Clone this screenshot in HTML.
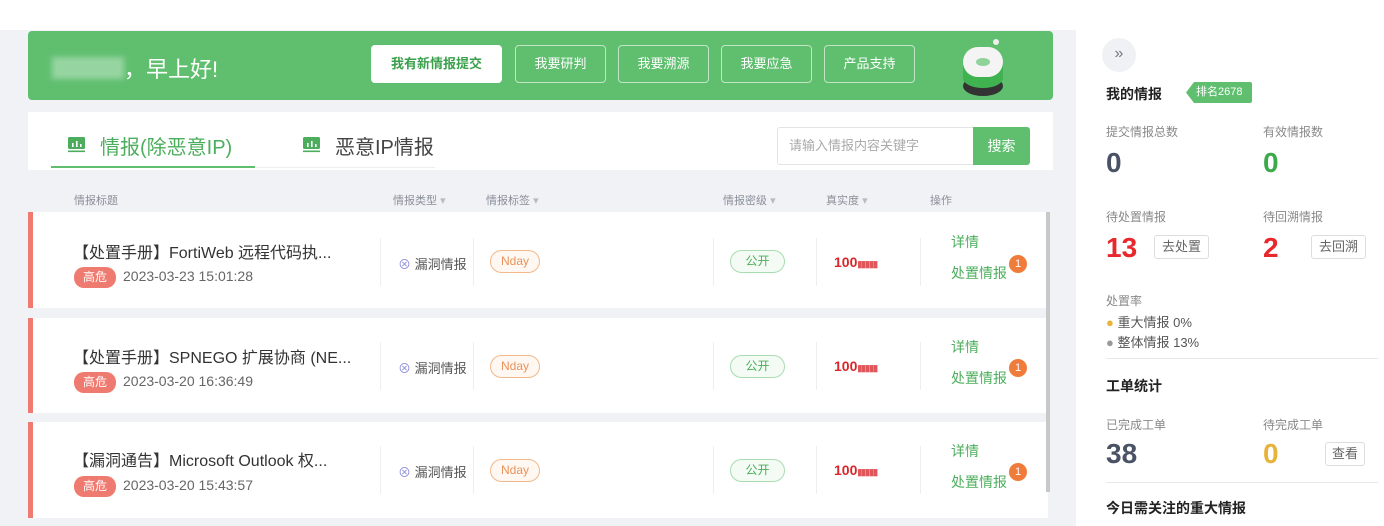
<!DOCTYPE html>
<html><head><meta charset="utf-8"><style>
*{margin:0;padding:0;box-sizing:border-box}
body{width:1384px;height:526px;overflow:hidden;background:#fff;font-family:"Liberation Sans","Noto Sans CJK SC",sans-serif;position:relative;color:#333}
.a{position:absolute}
.bg{left:0;top:30px;width:1070px;height:496px;background:#f0f2f5}
.ban{left:28px;top:31px;width:1025px;height:69px;background:#5fbf6f;border-radius:4px}
.btn{top:45px;height:38px;border:1px solid rgba(255,255,255,.6);border-radius:4px;color:#fff;font-size:13px;line-height:36px;text-align:center}
.card{left:28px;top:112px;width:1025px;height:58px;background:#fff}
.th{top:192px;font-size:11px;color:#8a8f99}
.row{left:28px;width:1020px;background:#fff;border-left:5px solid #ef7a6f}
.t{font-size:16px;color:#333}
.hi{background:#ef7a6f;color:#fff;font-size:12px;border-radius:10px;width:42px;height:21px;line-height:21px;text-align:center}
.d{font-size:14px;color:#666}
.nd{border:1px solid #f3b88a;color:#e8925a;font-size:12px;border-radius:12px;width:50px;height:23px;line-height:21px;text-align:center;background:#fff8f2}
.gk{border:1px solid #a8dcb1;color:#4cae5c;font-size:12px;border-radius:12px;width:55px;height:23px;line-height:21px;text-align:center;background:#f4fbf5}
.sc{font-size:14px;font-weight:bold;color:#d9262c}
.sc span{font-size:9px;letter-spacing:-1px;color:#e0575b}
.lk{color:#4cae5c;font-size:14px}
.dot{width:18px;height:18px;border-radius:50%;background:#ef7c3a;color:#fff;font-size:11px;text-align:center;line-height:18px}
.ty{font-size:13px;color:#555}
.sep{width:1px;height:48px;background:#eee}
.lb{font-size:12px;color:#888}
.n{font-size:28px;font-weight:bold}
.sb{border:1px solid #ddd;border-radius:3px;font-size:13px;color:#666;height:24px;line-height:22px;width:55px;text-align:center}
.h{font-size:14px;font-weight:bold;color:#222}
</style></head><body>
<div class="a bg"></div>
<div class="a ban"></div>
<div class="a" style="left:52px;top:57px;width:72px;height:22px;background:rgba(255,255,255,.35);filter:blur(3px)"></div>
<div class="a" style="left:124px;top:52px;color:#fff;font-size:22px">，早上好!</div>
<div class="a btn" style="left:371px;width:131px;background:#fff;color:#3aa04c;font-weight:bold;border-color:#fff">我有新情报提交</div>
<div class="a btn" style="left:515px;width:91px">我要研判</div>
<div class="a btn" style="left:618px;width:91px">我要溯源</div>
<div class="a btn" style="left:721px;width:91px">我要应急</div>
<div class="a btn" style="left:824px;width:91px">产品支持</div>
<div class="a" style="left:963px;top:76px;width:40px;height:20px;border-radius:50%;background:#333"></div>
<div class="a" style="left:963px;top:64px;width:40px;height:24px;border-radius:0 0 20px 20px/0 0 10px 10px;background:#3fb34f"></div>
<div class="a" style="left:963px;top:47px;width:40px;height:30px;border-radius:20px;background:#f4f4f4"></div>
<div class="a" style="left:976px;top:58px;width:14px;height:8px;border-radius:50%;background:#8fd29a"></div>
<div class="a" style="left:993px;top:39px;width:6px;height:6px;border-radius:50%;background:#eee"></div>
<div class="a card"></div>
<svg class="a" style="left:67px;top:136px" width="19" height="17"><rect x="1" y="1" width="17" height="12" rx="1.5" fill="#4cae5c"/><rect x="5" y="7" width="1.6" height="4" fill="#fff"/><rect x="9" y="5" width="1.6" height="6" fill="#fff"/><rect x="13" y="8" width="1.6" height="3" fill="#fff"/><rect x="1" y="14.5" width="17" height="1.6" fill="#4cae5c"/></svg>
<div class="a" style="left:100px;top:131px;font-size:20px;color:#4cae5c">情报(除恶意IP)</div>
<div class="a" style="left:51px;top:166px;width:204px;height:2px;background:#5fbf6f"></div>
<div class="a" style="left:255px;top:167px;width:180px;height:1px;background:#eee"></div>
<svg class="a" style="left:302px;top:136px" width="19" height="17"><rect x="1" y="1" width="17" height="12" rx="1.5" fill="#4cae5c"/><rect x="5" y="7" width="1.6" height="4" fill="#fff"/><rect x="9" y="5" width="1.6" height="6" fill="#fff"/><rect x="13" y="8" width="1.6" height="3" fill="#fff"/><rect x="1" y="14.5" width="17" height="1.6" fill="#4cae5c"/></svg>
<div class="a" style="left:335px;top:131px;font-size:20px;color:#444">恶意IP情报</div>
<div class="a" style="left:777px;top:127px;width:197px;height:38px;border:1px solid #e4e4e4;border-radius:3px 0 0 3px;font-size:13px;color:#aaa;line-height:36px;padding-left:11px">请输入情报内容关键字</div>
<div class="a" style="left:973px;top:127px;width:57px;height:38px;background:#5fbf6f;border-radius:0 3px 3px 0;color:#fff;font-size:14px;line-height:38px;text-align:center">搜索</div>
<div class="a th" style="left:74px">情报标题</div>
<div class="a th" style="left:393px">情报类型 <span style="color:#bbb">▾</span></div>
<div class="a th" style="left:486px">情报标签 <span style="color:#bbb">▾</span></div>
<div class="a th" style="left:723px">情报密级 <span style="color:#bbb">▾</span></div>
<div class="a th" style="left:826px">真实度 <span style="color:#bbb">▾</span></div>
<div class="a th" style="left:930px">操作</div>

<div class="a row" style="top:212px;height:96px"></div>
<div class="a row" style="top:318px;height:95px"></div>
<div class="a row" style="top:422px;height:96px"></div>

<div class="a" style="left:1046px;top:212px;width:4px;height:280px;background:#c8c8c8"></div>

<div class="a t" style="left:73px;top:239px">【处置手册】FortiWeb 远程代码执...</div>
<div class="a hi" style="left:74px;top:267px">高危</div>
<div class="a d" style="left:123px;top:268px">2023-03-23 15:01:28</div>
<div class="a t" style="left:73px;top:344px">【处置手册】SPNEGO 扩展协商 (NE...</div>
<div class="a hi" style="left:74px;top:372px">高危</div>
<div class="a d" style="left:123px;top:373px">2023-03-20 16:36:49</div>
<div class="a t" style="left:73px;top:447px">【漏洞通告】Microsoft Outlook 权...</div>
<div class="a hi" style="left:74px;top:476px">高危</div>
<div class="a d" style="left:123px;top:477px">2023-03-20 15:43:57</div>

<div class="a ty" style="left:398px;top:254px"><span style="color:#8f8fe0">⊗</span> 漏洞情报</div>
<div class="a ty" style="left:398px;top:358px"><span style="color:#8f8fe0">⊗</span> 漏洞情报</div>
<div class="a ty" style="left:398px;top:462px"><span style="color:#8f8fe0">⊗</span> 漏洞情报</div>
<div class="a nd" style="left:490px;top:250px">Nday</div>
<div class="a nd" style="left:490px;top:355px">Nday</div>
<div class="a nd" style="left:490px;top:459px">Nday</div>
<div class="a gk" style="left:730px;top:250px">公开</div>
<div class="a gk" style="left:730px;top:355px">公开</div>
<div class="a gk" style="left:730px;top:459px">公开</div>
<div class="a sc" style="left:834px;top:254px">100<span>▮▮▮▮▮</span></div>
<div class="a sc" style="left:834px;top:358px">100<span>▮▮▮▮▮</span></div>
<div class="a sc" style="left:834px;top:462px">100<span>▮▮▮▮▮</span></div>
<div class="a lk" style="left:951px;top:232px">详情</div>
<div class="a lk" style="left:951px;top:263px">处置情报</div>
<div class="a dot" style="left:1009px;top:255px">1</div>
<div class="a lk" style="left:951px;top:337px">详情</div>
<div class="a lk" style="left:951px;top:368px">处置情报</div>
<div class="a dot" style="left:1009px;top:359px">1</div>
<div class="a lk" style="left:951px;top:441px">详情</div>
<div class="a lk" style="left:951px;top:472px">处置情报</div>
<div class="a dot" style="left:1009px;top:463px">1</div>
<div class="a sep" style="left:380px;top:238px"></div><div class="a sep" style="left:473px;top:238px"></div><div class="a sep" style="left:713px;top:238px"></div><div class="a sep" style="left:816px;top:238px"></div><div class="a sep" style="left:920px;top:238px"></div>
<div class="a sep" style="left:380px;top:342px"></div><div class="a sep" style="left:473px;top:342px"></div><div class="a sep" style="left:713px;top:342px"></div><div class="a sep" style="left:816px;top:342px"></div><div class="a sep" style="left:920px;top:342px"></div>
<div class="a sep" style="left:380px;top:446px"></div><div class="a sep" style="left:473px;top:446px"></div><div class="a sep" style="left:713px;top:446px"></div><div class="a sep" style="left:816px;top:446px"></div><div class="a sep" style="left:920px;top:446px"></div>

<div class="a" style="left:1070px;top:30px;width:6px;height:496px;background:#f0f2f5"></div>
<div class="a" style="left:1102px;top:38px;width:34px;height:34px;border-radius:50%;background:#f0f1f4;color:#778;font-size:16px;text-align:center;line-height:32px">»</div>
<div class="a h" style="left:1106px;top:84px">我的情报</div>
<div class="a" style="left:1186px;top:82px;width:66px;height:21px;background:#5fbf6f;color:#fff;font-size:11px;line-height:21px;padding-left:10px;border-radius:2px;clip-path:polygon(8px 0,100% 0,100% 100%,8px 100%,0 50%)">排名2678</div>
<div class="a lb" style="left:1106px;top:123px">提交情报总数</div>
<div class="a lb" style="left:1263px;top:123px">有效情报数</div>
<div class="a n" style="left:1106px;top:147px;color:#4a5266">0</div>
<div class="a n" style="left:1263px;top:147px;color:#3daa4a">0</div>
<div class="a lb" style="left:1106px;top:208px">待处置情报</div>
<div class="a lb" style="left:1263px;top:208px">待回溯情报</div>
<div class="a n" style="left:1106px;top:232px;color:#e8282c">13</div>
<div class="a sb" style="left:1154px;top:235px">去处置</div>
<div class="a n" style="left:1263px;top:232px;color:#e8282c">2</div>
<div class="a sb" style="left:1311px;top:235px">去回溯</div>
<div class="a lb" style="left:1106px;top:292px">处置率</div>
<div class="a" style="left:1106px;top:312px;font-size:13px;color:#555"><span style="color:#e8b33a">●</span> 重大情报 0%</div>
<div class="a" style="left:1106px;top:332px;font-size:13px;color:#555"><span style="color:#999">●</span> 整体情报 13%</div>
<div class="a" style="left:1106px;top:358px;width:272px;height:1px;background:#e8e8e8"></div>
<div class="a h" style="left:1106px;top:376px">工单统计</div>
<div class="a lb" style="left:1106px;top:416px">已完成工单</div>
<div class="a lb" style="left:1263px;top:416px">待完成工单</div>
<div class="a n" style="left:1106px;top:438px;color:#4a5266">38</div>
<div class="a n" style="left:1263px;top:438px;color:#e8b33a">0</div>
<div class="a sb" style="left:1325px;top:442px;width:40px">查看</div>
<div class="a" style="left:1106px;top:482px;width:272px;height:1px;background:#e8e8e8"></div>
<div class="a h" style="left:1106px;top:498px">今日需关注的重大情报</div>
</body></html>
